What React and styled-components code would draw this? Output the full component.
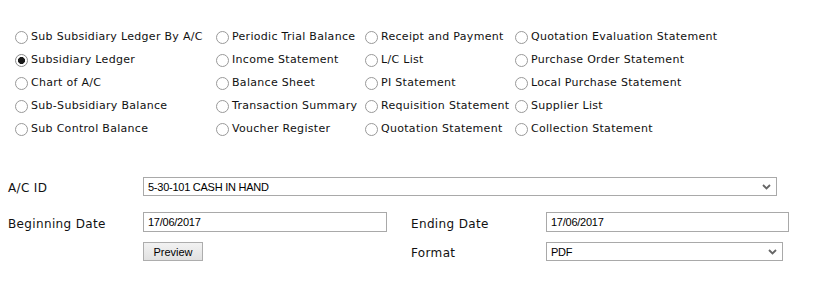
import styled, { createGlobalStyle } from "styled-components";

const GlobalStyle = createGlobalStyle`
body {
    margin: 0;
    background: #ffffff;
    font-family: "DejaVu Sans", Verdana, sans-serif;
    color: #000000;
}
`;

const reportColumns = [
    ["Sub Subsidiary Ledger By A/C", "Subsidiary Ledger", "Chart of A/C", "Sub-Subsidiary Balance", "Sub Control Balance"],
    ["Periodic Trial Balance", "Income Statement", "Balance Sheet", "Transaction Summary", "Voucher Register"],
    ["Receipt and Payment", "L/C List", "PI Statement", "Requisition Statement", "Quotation Statement"],
    ["Quotation Evaluation Statement", "Purchase Order Statement", "Local Purchase Statement", "Supplier List", "Collection Statement"],
];

export default function App() {
    const selected = "Subsidiary Ledger";

    return (
        <Page>
            <GlobalStyle />
            <ReportGrid>
                {reportColumns.map((col, ci) => (
                    <ReportColumn key={ci}>
                        {col.map((name) => (
                            <RadioLabel key={name}>
                                <Radio type="radio" name="report" defaultChecked={name === selected} />
                                {name}
                            </RadioLabel>
                        ))}
                    </ReportColumn>
                ))}
            </ReportGrid>

            <FormGrid>
                <FieldLabel>A/C ID</FieldLabel>
                <SelectBox $span={3} $w={634}>
                    <span>5-30-101 CASH IN HAND</span>
                    <Chevron />
                </SelectBox>

                <FieldLabel $mt={16}>Beginning Date</FieldLabel>
                <TextInput $mt={16} defaultValue="17/06/2017" />
                <FieldLabel $mt={16}>Ending Date</FieldLabel>
                <TextInput $mt={16} $w={243} defaultValue="17/06/2017" />

                <Spacer />
                <Button $mt={10}>Preview</Button>
                <FieldLabel $mt={10}>Format</FieldLabel>
                <SelectBox $mt={10} $w={237}>
                    <span>PDF</span>
                    <Chevron />
                </SelectBox>
            </FormGrid>
        </Page>
    );
}

function Chevron() {
    return (
        <svg width="9" height="6" viewBox="0 0 9 6">
            <path d="M1 1 L4.5 4.5 L8 1" fill="none" stroke="#666" strokeWidth="1.8" />
        </svg>
    );
}

const Page = styled.div`
width: 825px;
height: 300px;
padding-top: 25px;
box-sizing: border-box;
`;

const ReportGrid = styled.div`
display: grid;
grid-template-columns: 201px 149px 150px auto;
padding-left: 15px;
`;

const ReportColumn = styled.div`
display: flex;
flex-direction: column;
`;

const RadioLabel = styled.label`
display: flex;
align-items: center;
height: 23px;
font-size: 11px;
letter-spacing: 0.3px;
white-space: nowrap;
color: #111;
`;

const Radio = styled.input`
appearance: none;
flex: none;
width: 13px;
height: 13px;
margin: 1px 3px 0 0;
border: 1px solid #999;
border-radius: 50%;
box-sizing: border-box;
background: #fff;

&:checked {
    border-color: #8a8a8a;
    background: radial-gradient(circle, #1a1a1a 0 3.2px, #fff 3.8px);
}
`;

const FormGrid = styled.div`
display: grid;
grid-template-columns: 135px 268px 135px auto;
align-items: center;
padding-left: 8px;
margin-top: 37px;
`;

const FieldLabel = styled.div`
font-size: 12px;
letter-spacing: 0.35px;
color: #111;
padding-top: 3px;
margin-top: ${(p) => p.$mt || 0}px;
`;

const Spacer = styled.div``;

const boxBase = `
box-sizing: border-box;
border: 1px solid #a9a9a9;
background: #fff;
font-family: "Liberation Sans", Tahoma, sans-serif;
font-size: 11px;
letter-spacing: -0.25px;
color: #000;
`;

const SelectBox = styled.div`
${boxBase}
grid-column: span ${(p) => p.$span || 1};
width: ${(p) => p.$w}px;
height: 19px;
margin-top: ${(p) => p.$mt || 0}px;
display: flex;
align-items: center;
justify-content: space-between;
padding: 0 5px 0 4px;
`;

const TextInput = styled.input`
${boxBase}
width: ${(p) => p.$w || 244}px;
height: 20px;
margin: ${(p) => p.$mt || 0}px 0 0 0;
padding: 0 4px;
outline: none;
`;

const Button = styled.button`
box-sizing: border-box;
width: 60px;
height: 19px;
margin-top: ${(p) => p.$mt || 0}px;
padding: 0;
border: 1px solid #adadad;
background: linear-gradient(#f2f2f2, #e1e1e1);
font-family: "Liberation Sans", Tahoma, sans-serif;
font-size: 11px;
color: #000;
`;
